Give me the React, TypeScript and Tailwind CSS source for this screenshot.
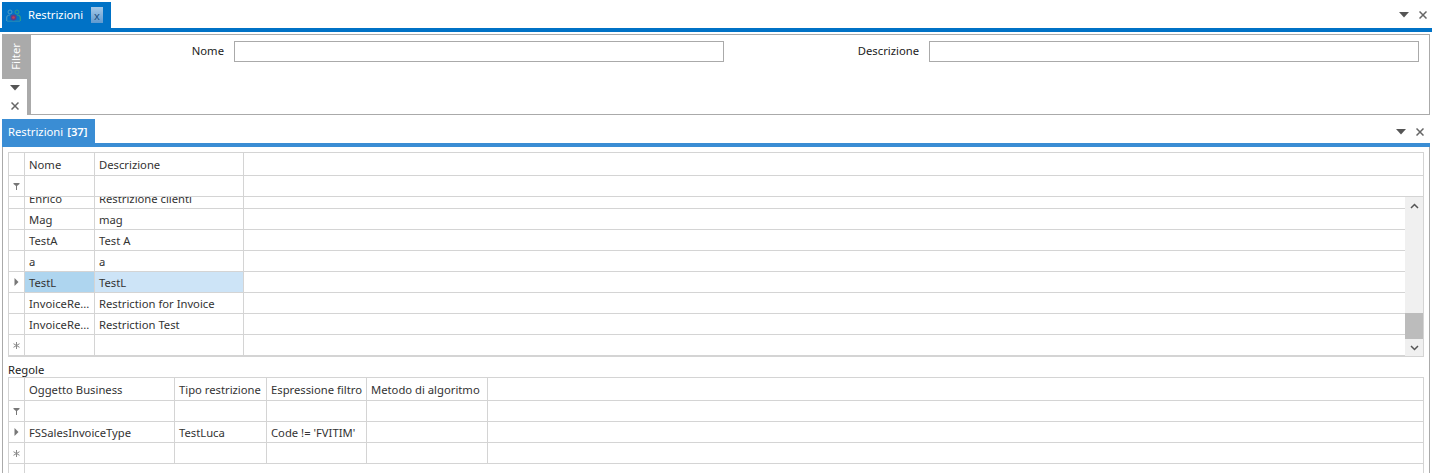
const font = "font-['Noto_Sans','Open_Sans',sans-serif]";

function ArrowDown() {
  return (
    <svg width="10" height="6" viewBox="0 0 10 6">
      <path d="M0 0h10L5 5.5z" fill="#555" />
    </svg>
  );
}

function CloseGlyph() {
  return (
    <svg width="8" height="8" viewBox="0 0 8 8">
      <path d="M0.5 0.5l7 7M7.5 0.5l-7 7" stroke="#666" strokeWidth="1.5" />
    </svg>
  );
}

function PanelActions() {
  return (
    <div className="flex items-center gap-[10px]">
      <ArrowDown />
      <CloseGlyph />
    </div>
  );
}

function PeopleIcon() {
  return (
    <svg width="15" height="13" viewBox="0 0 15 13" fill="none">
      <circle cx="4" cy="3" r="2" stroke="#4a9cc8" />
      <circle cx="11" cy="3" r="2" stroke="#2f9e8a" />
      <path d="M0.7 12V8.5C0.7 7 2.2 6 4 6" stroke="#3f93c4" strokeWidth="1.2" />
      <path d="M14.3 12V8.5C14.3 7 12.8 6 11 6" stroke="#2f9e8a" strokeWidth="1.2" />
      <path d="M1 12.2h13" stroke="#2b8fb5" />
      <circle cx="7.5" cy="8.5" r="3" fill="#5b3f88" />
      <circle cx="7.5" cy="8.5" r="1.3" fill="#c9404f" />
    </svg>
  );
}

function RowMark({ kind }: { kind?: "filter" | "current" | "new" }) {
  if (kind === "filter") {
    return (
      <svg width="7" height="7" viewBox="0 0 7 7">
        <path d="M0.5 0h6v1L4 3v4H3V3L0.5 1z" fill="#777" />
      </svg>
    );
  }
  if (kind === "current") {
    return (
      <svg width="5" height="8" viewBox="0 0 5 8">
        <path d="M0.5 0l4 4-4 4z" fill="#777" />
      </svg>
    );
  }
  if (kind === "new") {
    return (
      <svg width="7" height="7" viewBox="0 0 7 7">
        <path d="M3.5 0v7M0.5 1.7l6 3.6M6.5 1.7l-6 3.6" stroke="#888" strokeWidth="1" />
      </svg>
    );
  }
  return null;
}

interface GridRowProps {
  widths: number[];
  cells?: string[];
  mark?: "filter" | "current" | "new";
  height: number;
  selected?: boolean;
}

function GridRow({ widths, cells = [], mark, height, selected }: GridRowProps) {
  return (
    <div className="flex shrink-0 border-b border-[#d4d4d4]" style={{ height }}>
      <div className="flex w-[16px] shrink-0 items-center justify-center border-r border-[#d4d4d4]">
        <RowMark kind={mark} />
      </div>
      {widths.map((w, i) => (
        <div
          key={i}
          className={`flex shrink-0 items-center overflow-hidden whitespace-nowrap border-r border-[#d4d4d4] pl-[4px] pt-[2px] ${
            selected ? (i === 0 ? "bg-[#aed5ef]" : "bg-[#cde4f7]") : ""
          }`}
          style={{ width: w }}
        >
          {cells[i]}
        </div>
      ))}
    </div>
  );
}

const topCols = [70, 149];
const bottomCols = [150, 92, 100, 121];

const topRows = [
  ["Mag", "mag"],
  ["TestA", "Test A"],
  ["a", "a"],
  ["TestL", "TestL"],
  ["InvoiceRe...", "Restriction for Invoice"],
  ["InvoiceRe...", "Restriction Test"],
];

function Scrollbar() {
  return (
    <div className="flex w-[18px] shrink-0 flex-col bg-[#f0f0f0]">
      <div className="flex h-[17px] items-center justify-center">
        <svg width="9" height="6" viewBox="0 0 9 6" fill="none">
          <path d="M1 5l3.5-3.5L8 5" stroke="#555" strokeWidth="1.5" />
        </svg>
      </div>
      <div className="h-[99px]" />
      <div className="h-[26px] bg-[#bcbcbc]" />
      <div className="flex h-[17px] items-center justify-center">
        <svg width="9" height="6" viewBox="0 0 9 6" fill="none">
          <path d="M1 1l3.5 3.5L8 1" stroke="#555" strokeWidth="1.5" />
        </svg>
      </div>
    </div>
  );
}

export default function App() {
  return (
    <div className={`${font} flex h-[473px] w-[1432px] flex-col overflow-hidden bg-white text-[11.25px] text-[#333]`}>
      {/* document tab */}
      <div className="flex h-[28px] shrink-0 items-end justify-between pl-[2px] pr-[4px]">
        <div className="flex h-[26px] w-[109px] items-center bg-[#0072c6] pl-[4px] text-white">
          <PeopleIcon />
          <span className="ml-[7px] w-[63px]">Restrizioni</span>
          <span className="flex h-[16px] w-[12px] items-center justify-center bg-gradient-to-b from-[#a5c8e6] to-[#5f9ad0] text-[11px] leading-none text-[#1c4f80]">
            x
          </span>
        </div>
        <div className="mb-[9px] mr-[1px]">
          <PanelActions />
        </div>
      </div>
      <div className="h-[4px] shrink-0 bg-[#0072c6]" />

      {/* filter panel */}
      <div className="ml-[2px] mt-[2px] flex h-[81px] w-[1428px] shrink-0">
        <div className="flex w-[29px] shrink-0 flex-col">
          <div className="flex h-[45px] items-center justify-center pr-[1px] pb-[1px] bg-[#aaaaaa] text-white">
            <span className="-rotate-90">Filter</span>
          </div>
          <div className="flex flex-1">
            <div className="flex w-[25px] flex-col items-center gap-[11px] pt-[6px]">
              <ArrowDown />
              <CloseGlyph />
            </div>
            <div className="w-[4px] bg-[#aaaaaa]" />
          </div>
        </div>
        <div className="flex flex-1 items-start border-y border-r border-[#aaaaaa] pt-[6px]">
          <div className="flex h-[21px] w-[193px] items-center justify-end text-[#222]">Nome</div>
          <div className="ml-[10px] h-[21px] w-[490px] border border-[#aaaaaa]" />
          <div className="flex h-[21px] w-[195px] items-center justify-end text-[#222]">Descrizione</div>
          <div className="ml-[10px] h-[21px] w-[490px] border border-[#aaaaaa]" />
        </div>
      </div>

      {/* list tab */}
      <div className="mt-[4px] flex h-[24px] shrink-0 items-center justify-between pl-[2px] pr-[8px]">
        <div className="flex h-[24px] w-[93px] items-center bg-[#3a8dd4] pl-[6px] pt-[2px] text-white">
          Restrizioni <span className="ml-[4px] font-semibold">[37]</span>
        </div>
        <div className="mt-[2px]">
          <PanelActions />
        </div>
      </div>
      <div className="mx-[2px] h-[4px] w-[1428px] shrink-0 bg-[#3a8dd4]" />

      {/* grids */}
      <div className="mx-[2px] flex w-[1428px] flex-1 flex-col border-x border-[#aaaaaa] px-[5px] pt-[5px]">
        <div className="flex h-[205px] w-[1416px] shrink-0 flex-col border border-[#d4d4d4]">
          <GridRow widths={topCols} cells={["Nome", "Descrizione"]} height={23} />
          <GridRow widths={topCols} mark="filter" height={21} />
          <div className="flex flex-1">
            <div className="flex min-w-0 flex-1 flex-col overflow-hidden">
              <div className="h-[12px] shrink-0 overflow-hidden">
                <div className="-mt-[9px]">
                  <GridRow widths={topCols} cells={["Enrico", "Restrizione clienti"]} height={21} />
                </div>
              </div>
              {topRows.map((r) => (
                <GridRow
                  key={r[0] + r[1]}
                  widths={topCols}
                  cells={r}
                  height={21}
                  mark={r[0] === "TestL" ? "current" : undefined}
                  selected={r[0] === "TestL"}
                />
              ))}
              <GridRow widths={topCols} mark="new" height={21} />
            </div>
            <Scrollbar />
          </div>
        </div>

        <div className="mt-[6px] flex h-[14px] shrink-0 items-center text-[#222]">Regole</div>

        <div className="flex w-[1416px] flex-1 flex-col border-x border-t border-[#d4d4d4]">
          <GridRow
            widths={bottomCols}
            cells={["Oggetto Business", "Tipo restrizione", "Espressione filtro", "Metodo di algoritmo"]}
            height={23}
          />
          <GridRow widths={bottomCols} mark="filter" height={21} />
          <GridRow
            widths={bottomCols}
            cells={["FSSalesInvoiceType", "TestLuca", "Code != 'FVITIM'"]}
            mark="current"
            height={21}
          />
          <GridRow widths={bottomCols} mark="new" height={21} />
          <div className="flex flex-1">
            <div className="w-[16px] border-r border-[#d4d4d4]" />
          </div>
        </div>
      </div>
    </div>
  );
}
